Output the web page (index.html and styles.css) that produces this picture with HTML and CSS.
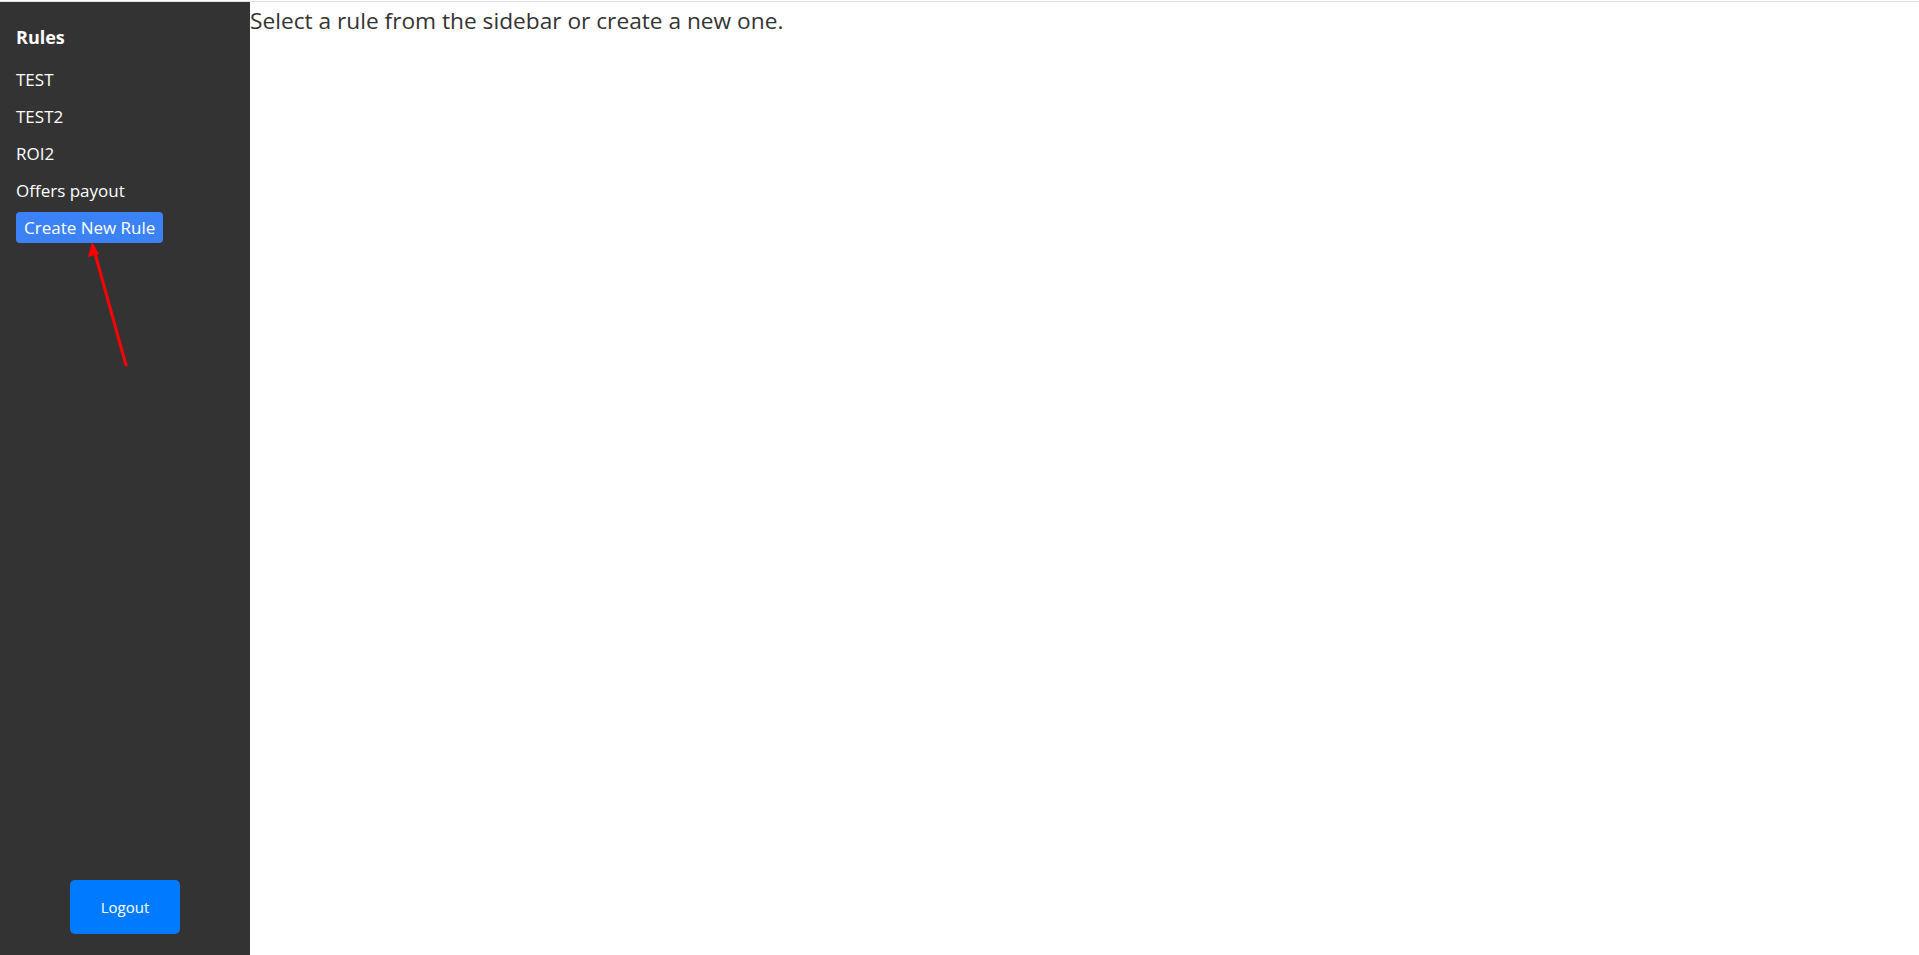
FILE: index.html
```html
<!DOCTYPE html>
<html lang="en">
<head>
<meta charset="utf-8">
<title>Rules</title>
<link rel="stylesheet" href="styles.css">
</head>
<body>
<div class="app">
  <aside class="sidebar">
    <div class="sidebar-top">
      <h2 class="sidebar-title">Rules</h2>
      <ul class="rule-list">
        <li class="rule-item">TEST</li>
        <li class="rule-item">TEST2</li>
        <li class="rule-item">ROI2</li>
        <li class="rule-item">Offers payout</li>
      </ul>
      <button class="btn-create">Create New Rule</button>
    </div>
    <div class="sidebar-bottom">
      <button class="btn-logout">Logout</button>
    </div>
    <svg class="annotation" width="60" height="140" viewBox="0 0 60 140">
      <line x1="47" y1="123" x2="15" y2="8" stroke="#ff0000" stroke-width="3" stroke-linecap="round"/>
      <polygon points="13,0 9,15 20,12" fill="#ff0000"/>
    </svg>
  </aside>
  <main class="content">
    <p class="placeholder">Select a rule from the sidebar or create a new one.</p>
  </main>
</div>
</body>
</html>
```

FILE: styles.css
```css
html, body {
  margin: 0;
  padding: 0;
  background: #ffffff;
}

body {
  font-family: "Open Sans", "Noto Sans", sans-serif;
  padding-top: 1px;
}

.app {
  display: flex;
  border-top: 1px solid #e2e2e2;
  height: 953px;
}

.sidebar {
  position: relative;
  width: 250px;
  flex: 0 0 250px;
  background: #333333;
  color: #ffffff;
  display: flex;
  flex-direction: column;
  justify-content: space-between;
  box-sizing: border-box;
  padding: 0 16px 21px 16px;
}

.sidebar-title {
  margin: 23px 0 0 0;
  font-size: 18px;
  font-weight: 700;
  line-height: 24px;
}

.rule-list {
  list-style: none;
  margin: 20px 0 0 0;
  padding: 0;
}

.rule-item {
  font-size: 17px;
  line-height: 22px;
  margin-bottom: 15px;
}

.btn-create {
  margin-top: -7px;
  font-family: inherit;
  font-size: 17px;
  line-height: 21px;
  color: #ffffff;
  background: #3b82f6;
  border: none;
  border-radius: 4px;
  padding: 5px 8px;
  cursor: pointer;
}

.sidebar-bottom {
  display: flex;
  justify-content: center;
}

.btn-logout {
  width: 110px;
  height: 54px;
  font-family: inherit;
  font-size: 15px;
  color: #ffffff;
  background: #007bff;
  border: none;
  border-radius: 5px;
  cursor: pointer;
}

.annotation {
  position: absolute;
  left: 79px;
  top: 240px;
  overflow: visible;
}

.content {
  flex: 1;
  color: #333333;
}

.placeholder {
  margin: 0;
  font-size: 22.7px;
  line-height: 38px;
}
```
